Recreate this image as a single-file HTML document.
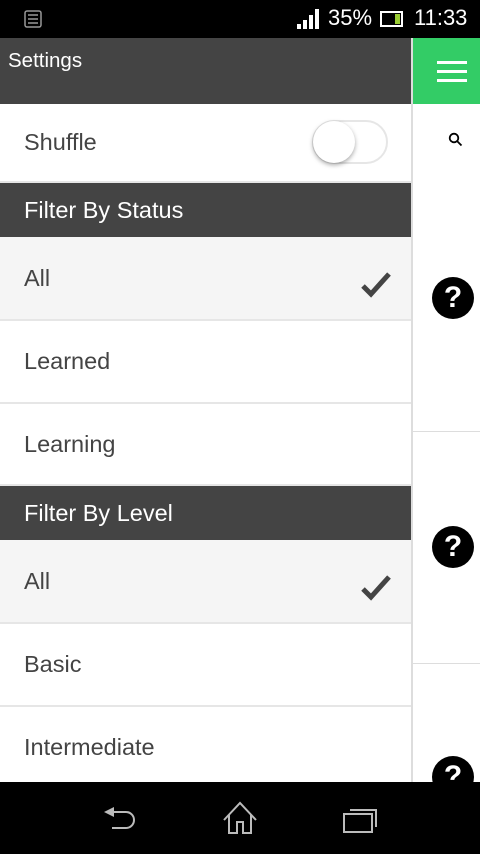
<!DOCTYPE html>
<html><head><style>
*{margin:0;padding:0;box-sizing:border-box}
body{width:480px;height:854px;overflow:hidden;position:relative;background:#fff;font-family:"Liberation Sans",Roboto,sans-serif}
.a{position:absolute}
.row{position:absolute;left:0;width:411px;border-bottom:2px solid #e6e6e6;font-size:23.5px;color:#444;padding-left:24px;display:flex;align-items:center}
.hd{position:absolute;left:0;width:411px;background:#444;color:#fff;font-size:23.5px;padding-left:24px;display:flex;align-items:center}
.q{position:absolute;left:432px;width:42px;height:42px;border-radius:50%;background:#000;color:#fff;font-weight:bold;font-size:30px;text-align:center;line-height:42px}
</style></head><body>
<div class="a" style="left:0;top:0;width:480px;height:38px;background:#000"></div>
<svg class="a" style="left:24px;top:10px" width="18" height="18"><rect x="1" y="1" width="16" height="16" rx="2" fill="none" stroke="#999" stroke-width="1.5"/><path d="M4 5h10M4 9h10M4 13h10" stroke="#999" stroke-width="1.5"/></svg>
<svg class="a" style="left:297px;top:9px" width="24" height="20"><path d="M0 20h4v-5H0zM6 20h4v-9H6zM12 20h4v-14h-4zM18 20h4V0h-4z" fill="#fff"/></svg>
<div class="a" style="left:328px;top:5px;color:#fff;font-size:22px">35%</div>
<svg class="a" style="left:380px;top:11px" width="24" height="16"><rect x="1" y="1" width="21" height="14" fill="none" stroke="#fff" stroke-width="2"/><rect x="15" y="3" width="5" height="10" fill="#9c3"/><rect x="3" y="3" width="12" height="10" fill="#000"/></svg>
<div class="a" style="left:414px;top:5px;color:#fff;font-size:22px">11:33</div>
<div class="a" style="left:0;top:38px;width:411px;height:66px;background:#444"></div>
<div class="a" style="left:8px;top:49px;color:#fff;font-size:20.5px">Settings</div>
<div class="a" style="left:411px;top:38px;width:2px;height:744px;background:#ddd"></div>
<div class="a" style="left:413px;top:38px;width:67px;height:66px;background:#33cc66"></div>
<div class="a" style="left:437px;top:61px;width:30px;height:3px;background:#fff"></div>
<div class="a" style="left:437px;top:70px;width:30px;height:3px;background:#fff"></div>
<div class="a" style="left:437px;top:79px;width:30px;height:3px;background:#fff"></div>
<svg class="a" style="left:448px;top:132px" width="16" height="16"><circle cx="6" cy="6" r="4.3" fill="none" stroke="#000" stroke-width="1.8"/><path d="M9 9l4.5 4.5" stroke="#000" stroke-width="1.8"/></svg>
<div class="a" style="left:413px;top:431px;width:67px;height:1px;background:#ddd"></div>
<div class="a" style="left:413px;top:663px;width:67px;height:1px;background:#ddd"></div>
<div class="q" style="top:277px">?</div>
<div class="q" style="top:526px">?</div>
<div class="q" style="top:756px">?</div>
<div class="row" style="top:104px;height:79px">Shuffle</div>
<div class="a" style="left:312px;top:120px;width:76px;height:44px;border-radius:22px;border:2px solid #e6e6e6;background:#fff"></div>
<div class="a" style="left:313px;top:121px;width:42px;height:42px;border-radius:50%;background:#fff;box-shadow:0 2px 5px rgba(0,0,0,.35)"></div>
<div class="hd" style="top:183px;height:54px">Filter By Status</div>
<div class="row" style="top:237px;height:84px;background:#f5f5f5">All</div>
<div class="row" style="top:321px;height:83px">Learned</div>
<div class="row" style="top:404px;height:82px">Learning</div>
<div class="hd" style="top:486px;height:54px">Filter By Level</div>
<div class="row" style="top:540px;height:84px;background:#f5f5f5">All</div>
<div class="row" style="top:624px;height:83px">Basic</div>
<div class="row" style="top:707px;height:80px;border:none">Intermediate</div>
<svg class="a" style="left:360px;top:270px" width="32" height="30"><path d="M3 16l8 8L29 4" fill="none" stroke="#444" stroke-width="5"/></svg>
<svg class="a" style="left:360px;top:573px" width="32" height="30"><path d="M3 16l8 8L29 4" fill="none" stroke="#444" stroke-width="5"/></svg>
<div class="a" style="left:0;top:782px;width:480px;height:72px;background:#000"></div>
<svg class="a" style="left:100px;top:805px" width="40" height="30"><path d="M12 7h14a8 8 0 0 1 0 16H12" fill="none" stroke="#bbb" stroke-width="2"/><path d="M4 7l10-5v10z" fill="#bbb"/></svg>
<svg class="a" style="left:220px;top:800px" width="40" height="35"><path d="M4 20L20 3l16 17M9 15v18h8v-11h6v11h8V15" fill="none" stroke="#bbb" stroke-width="2"/></svg>
<svg class="a" style="left:340px;top:805px" width="40" height="30"><rect x="4" y="9" width="28" height="18" fill="none" stroke="#bbb" stroke-width="2"/><path d="M10 5h26v17" fill="none" stroke="#bbb" stroke-width="2"/></svg>
</body></html>
